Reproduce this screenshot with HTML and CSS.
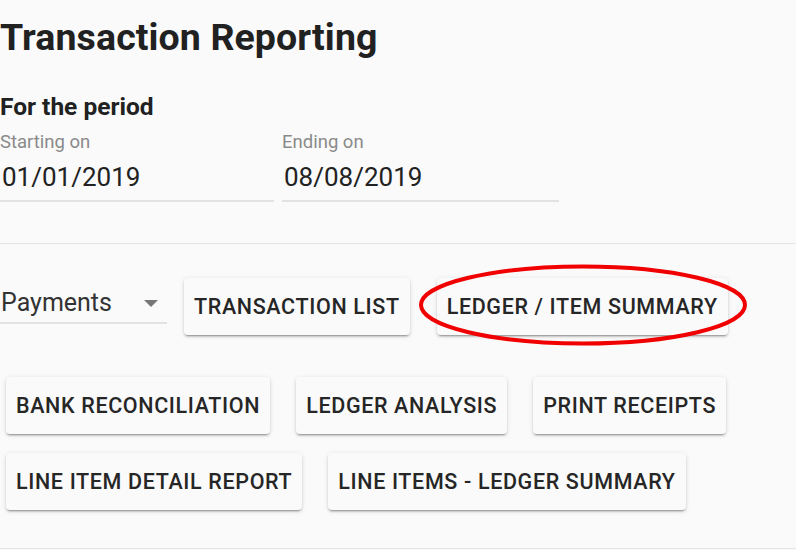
FILE: index.html
```html
<!DOCTYPE html>
<html>
<head>
<meta charset="utf-8">
<link rel="stylesheet" href="styles.css">
</head>
<body>
<div class="page">
  <h1 class="title">Transaction Reporting</h1>
  <h2 class="subtitle">For the period</h2>
  <div class="dates">
    <div class="field field-start">
      <label class="field-label">Starting on</label>
      <div class="field-value">01/01/2019</div>
    </div>
    <div class="field field-end">
      <label class="field-label">Ending on</label>
      <div class="field-value">08/08/2019</div>
    </div>
  </div>
  <hr class="divider">
  <div class="actions">
    <div class="row row-first">
      <div class="select">
        <span class="select-text">Payments</span>
        <span class="select-arrow"></span>
      </div>
      <button class="btn">TRANSACTION LIST</button>
      <button class="btn btn-marked">LEDGER / ITEM SUMMARY
        <svg class="ring" width="334" height="86" viewBox="0 0 334 86"><ellipse cx="166" cy="41" rx="162" ry="38.5" fill="none" stroke="#f00000" stroke-width="4"/></svg>
      </button>
    </div>
    <div class="row row-indent">
      <button class="btn">BANK RECONCILIATION</button>
      <button class="btn">LEDGER ANALYSIS</button>
      <button class="btn">PRINT RECEIPTS</button>
    </div>
    <div class="row row-indent row-last">
      <button class="btn">LINE ITEM DETAIL REPORT</button>
      <button class="btn">LINE ITEMS - LEDGER SUMMARY</button>
    </div>
  </div>
  <hr class="divider divider-bottom">
</div>
</body>
</html>
```

FILE: styles.css
```css
html, body {
  margin: 0;
  padding: 0;
  background: #fafafa;
}
body {
  font-family: Roboto, "Noto Sans", sans-serif;
  color: #212121;
  width: 796px;
  height: 550px;
  overflow: hidden;
}
.page {
  padding-top: 14px;
}
.title {
  margin: 0;
  font-size: 37.5px;
  font-weight: 700;
  line-height: 46px;
  letter-spacing: 0.1px;
}
.subtitle {
  margin: 32px 0 0 0;
  font-size: 24.5px;
  font-weight: 700;
  line-height: 30px;
}
.dates {
  display: flex;
  gap: 8px;
  margin-top: 9px;
}
.field {
  display: flex;
  flex-direction: column;
  border-bottom: 2px solid #e2e2e2;
  height: 71px;
  box-sizing: border-box;
}
.field-start { width: 274px; }
.field-end { width: 277px; }
.field-label {
  font-size: 18.5px;
  color: #8a8a8a;
  line-height: 22px;
}
.field-value {
  font-size: 26px;
  line-height: 30px;
  margin-top: 9px;
  padding-left: 2px;
  color: #222;
}
.divider {
  margin: 41px 0 0 0;
  border: 0;
  border-top: 1.5px solid #e4e4e4;
  height: 0;
}
.actions {
  display: flex;
  flex-direction: column;
  gap: 19px;
  padding-top: 34px;
}
.row {
  display: flex;
  align-items: center;
  gap: 26px;
}
.row-first {
  gap: 0;
  margin-bottom: 23px;
}
.row-indent { padding-left: 6px; }
.select {
  width: 167px;
  height: 46px;
  box-sizing: border-box;
  border-bottom: 2px solid #e2e2e2;
  display: flex;
  align-items: center;
  justify-content: space-between;
  padding: 4px 9px 0 1px;
  margin-right: 17px;
  margin-bottom: 11px;
}
.select-text {
  font-size: 25px;
  color: #333;
}
.select-arrow {
  width: 0;
  height: 0;
  border-left: 7.5px solid transparent;
  border-right: 7.5px solid transparent;
  border-top: 7.5px solid #777;
  margin-top: 2px;
}
.btn {
  position: relative;
  font-family: Roboto, "Noto Sans", sans-serif;
  font-weight: 500;
  font-size: 21.5px;
  letter-spacing: 0.64px;
  color: #262626;
  background: #fafafa;
  border: 0;
  border-radius: 4px;
  height: 57px;
  padding: 0 10px;
  box-shadow: 0 3px 1px -2px rgba(0,0,0,.2), 0 2px 2px 0 rgba(0,0,0,.14), 0 1px 5px 0 rgba(0,0,0,.12);
}
.row-first .btn { margin-right: 27px; }
.ring {
  position: absolute;
  left: -20px;
  top: -14px;
  pointer-events: none;
}
.divider-bottom {
  margin-top: 38px;
}
```
